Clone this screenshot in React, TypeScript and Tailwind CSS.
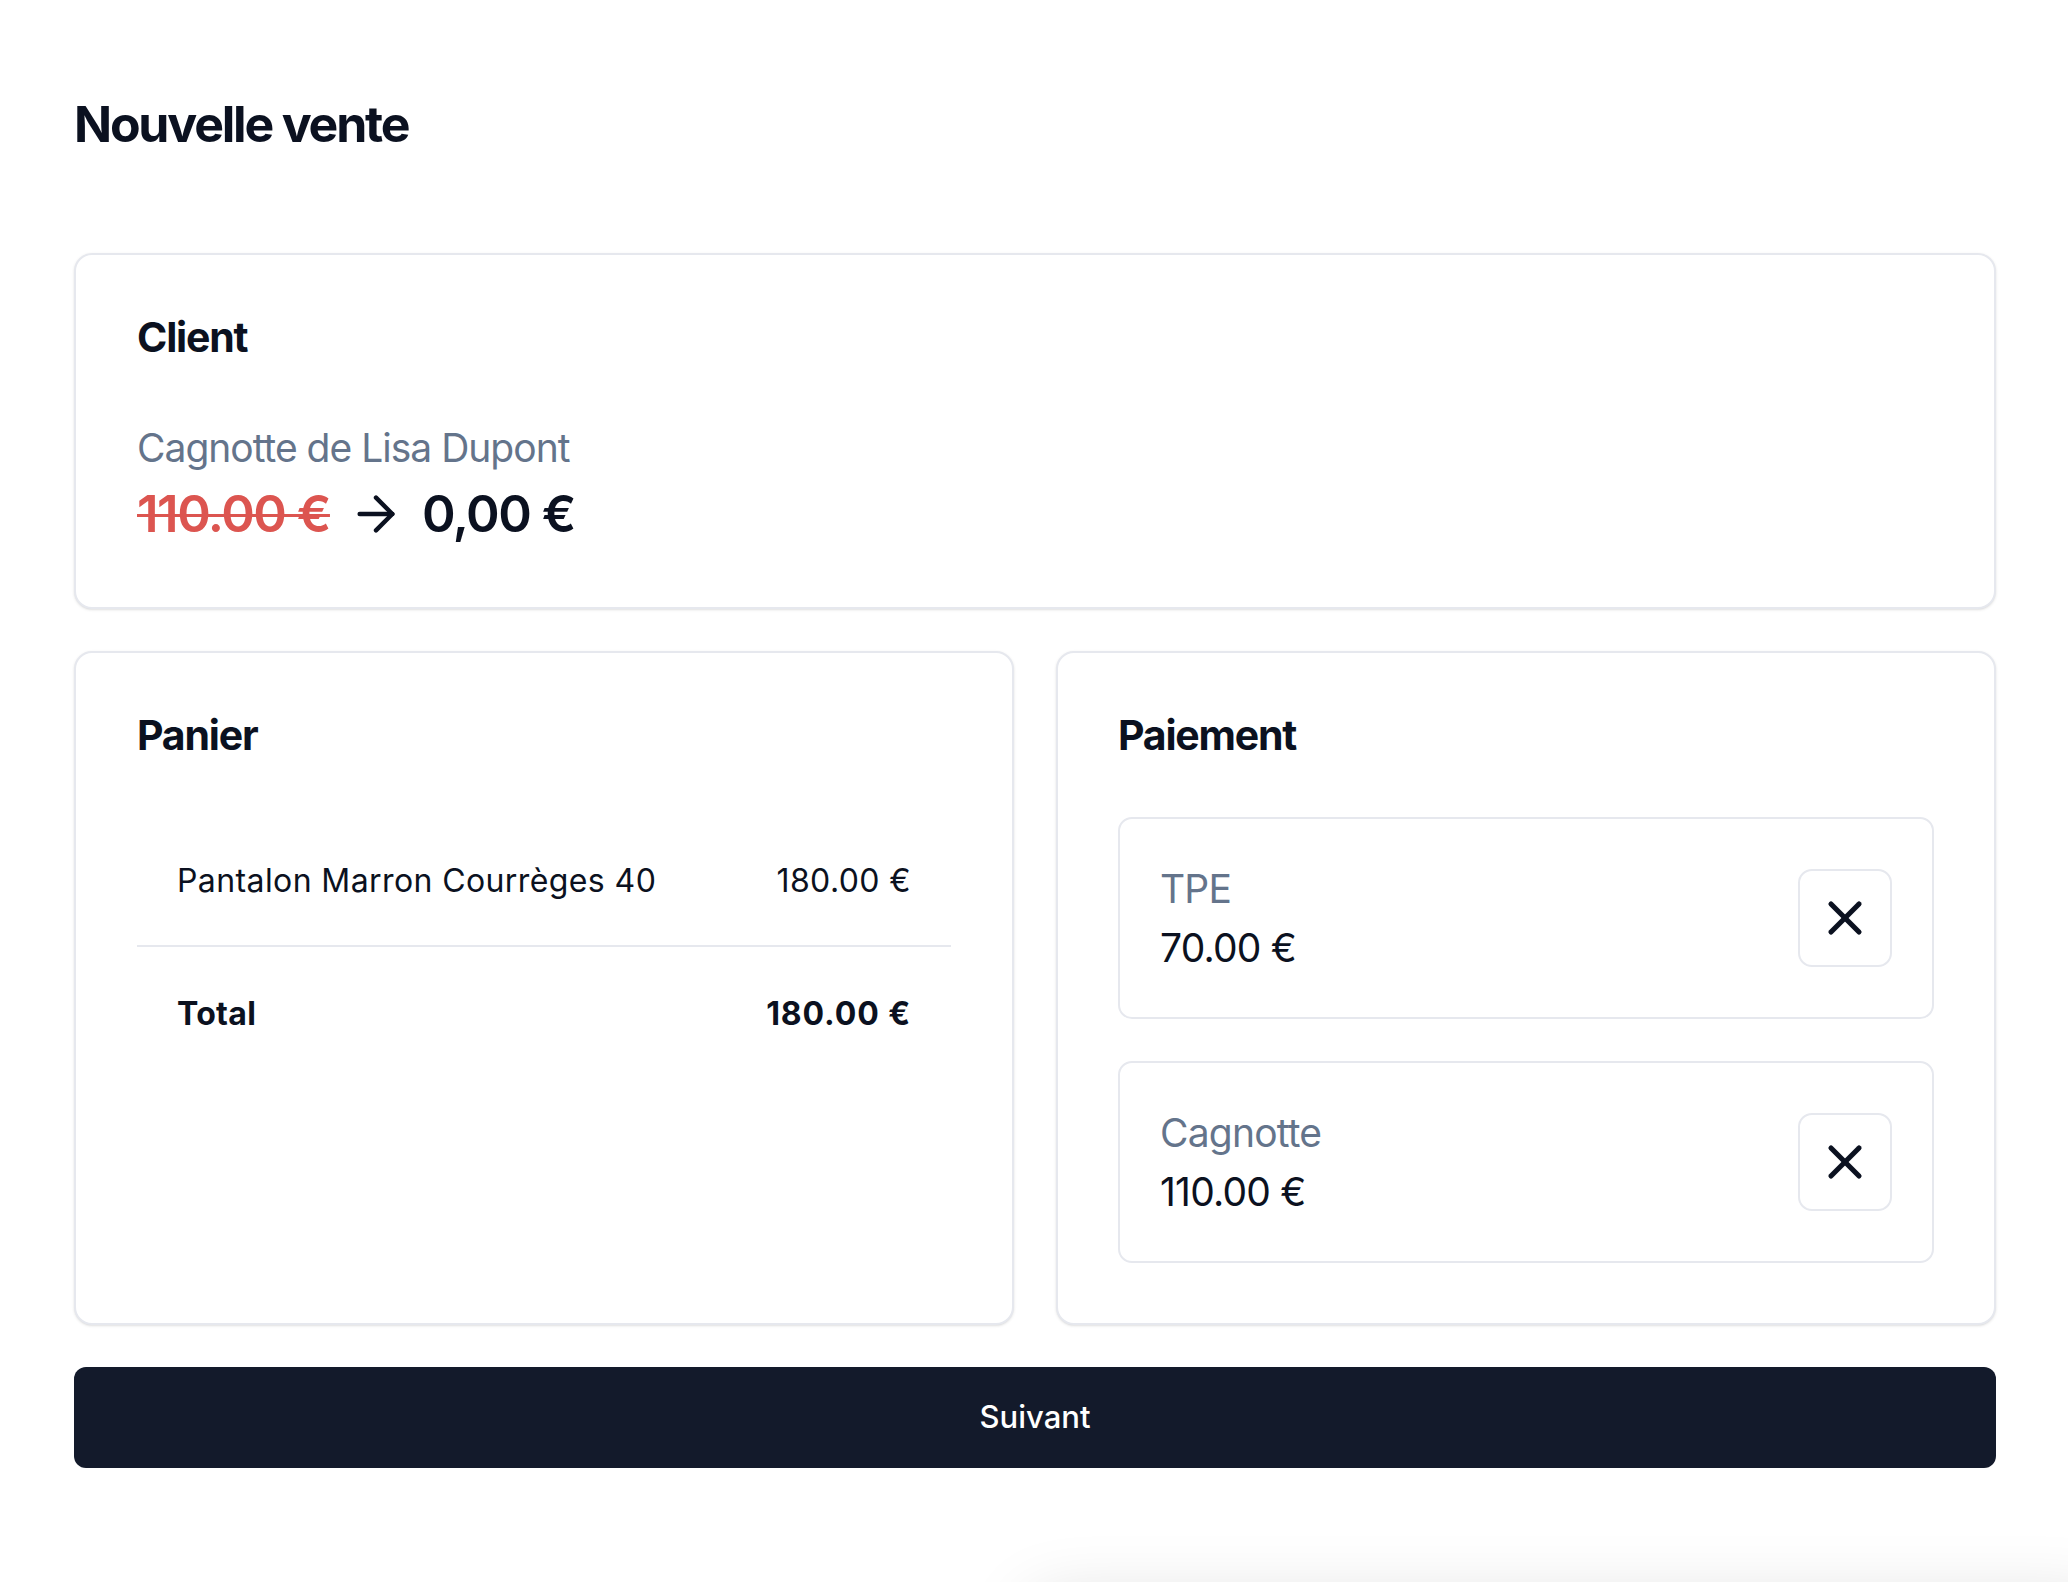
import { ArrowRight, X } from "lucide-react";

type Payment = {
  label: string;
  amount: string;
};

const payments: Payment[] = [
  { label: "TPE", amount: "70.00 €" },
  { label: "Cagnotte", amount: "110.00 €" },
];

export default function App() {
  return (
    <div className="min-h-screen w-full bg-white pl-[74px] pr-[72px] pt-[94px] font-['Inter',sans-serif] text-[#0b1120]">
      <h1 className="text-[50px] leading-[60px] font-bold tracking-[-2.2px]">Nouvelle vente</h1>

      <div className="mt-[99px] flex flex-col gap-[42px]">
        {/* client */}
        <section className="rounded-[18px] border-2 border-[#e6e8ee] bg-white px-[61px] pt-[58px] pb-[62px] shadow-sm">
          <CardTitle>Client</CardTitle>
          <p className="mt-[58px] text-[39px] leading-[58px] tracking-[-1px] text-[#64748b]">Cagnotte de Lisa Dupont</p>
          <div className="mt-[6px] flex items-center gap-[18px] text-[51px] leading-[62px] font-semibold tracking-[-1.5px]">
            <span className="text-[#dc5550] line-through decoration-[3px]">110.00 €</span>
            <ArrowRight size={56} strokeWidth={1.9} />
            <span>0,00 €</span>
          </div>
        </section>

        <div className="grid grid-cols-2 gap-[42px]">
          {/* panier */}
          <section className="rounded-[18px] border-2 border-[#e6e8ee] bg-white px-[61px] pt-[58px] pb-[60px] shadow-sm">
            <CardTitle>Panier</CardTitle>
            <div className="mt-[58px] text-[32px]">
              <div className="flex h-[130px] items-center justify-between border-b-2 border-[#e6e8ee] px-[40px] tracking-[0.4px]">
                <span>Pantalon Marron Courrèges 40</span>
                <span>180.00 €</span>
              </div>
              <div className="flex h-[134px] items-center justify-between px-[40px] font-bold">
                <span className="tracking-[0.3px]">Total</span>
                <span className="tracking-[0.9px]">180.00 €</span>
              </div>
            </div>
          </section>

          {/* paiement */}
          <section className="rounded-[18px] border-2 border-[#e6e8ee] bg-white px-[60px] pt-[58px] pb-[60px] shadow-sm">
            <CardTitle>Paiement</CardTitle>
            <div className="mt-[58px] flex flex-col gap-[42px]">
              {payments.map((p) => (
                <PaymentRow key={p.label} {...p} />
              ))}
            </div>
          </section>
        </div>

        <button className="h-[101px] w-full rounded-[12px] bg-[#131a2b] text-[31px] font-medium text-white">
          Suivant
        </button>
      </div>

      {/* toast sitting just below the viewport */}
      <div className="fixed left-[1030px] right-[-40px] top-[1600px] h-[120px] rounded-[16px] bg-white shadow-[0_0_70px_rgba(0,0,0,0.14)]" />
    </div>
  );
}

function CardTitle(props: { children: React.ReactNode }) {
  return <h2 className="text-[41px] leading-[48px] font-bold tracking-[-1.2px]">{props.children}</h2>;
}

function PaymentRow(props: Payment) {
  return (
    <div className="flex h-[202px] items-center justify-between rounded-[14px] border-2 border-[#e6e8ee] px-[40px]">
      <div className="text-[39px] leading-[59px] tracking-[-0.8px]">
        <p className="text-[#64748b]">{props.label}</p>
        <p>{props.amount}</p>
      </div>
      <button className="flex h-[98px] w-[94px] items-center justify-center rounded-[14px] border-2 border-[#e6e8ee]">
        <X size={56} strokeWidth={2.2} />
      </button>
    </div>
  );
}
